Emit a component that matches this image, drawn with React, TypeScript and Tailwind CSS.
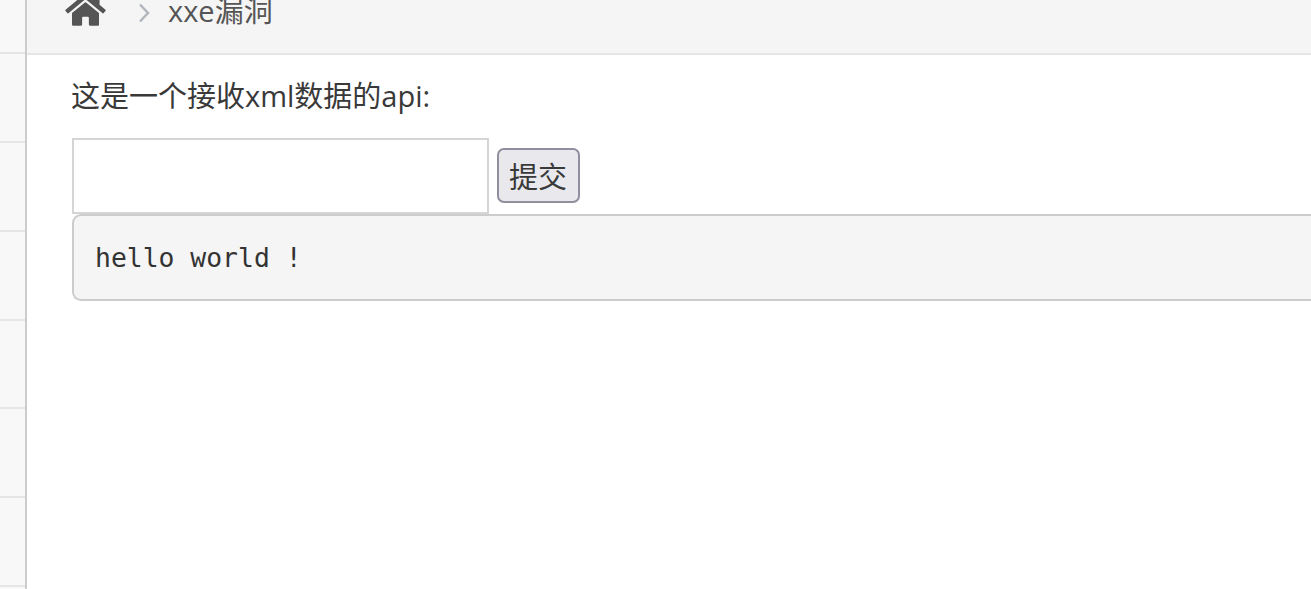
import React from "react";
import { FaHome } from "react-icons/fa";

const rows = [0, 1, 2, 3, 4, 5];

export default function App() {
  return (
    <div className="flex h-[589px] w-[1311px] overflow-hidden bg-white font-['Open_Sans','Noto_Sans_CJK_SC',sans-serif] text-[29px] text-[#393939]">
      {/* sidebar strip */}
      <div className="h-full w-[27px] shrink-0 border-r-2 border-[#cccccc] bg-[#f8f8f8]">
        <div className="h-[54.2px] border-b-2 border-[#e5e5e5]" />
        {rows.map((r) => (
          <div key={r} className="h-[88.8px] border-b-2 border-[#e5e5e5]" />
        ))}
      </div>

      <div className="min-w-0 flex-1">
        {/* breadcrumb */}
        <div className="flex h-[55px] items-start border-b-2 border-[#e5e5e5] bg-[#f5f5f5] text-[#555555]">
          <div className="-mt-[9px] flex h-[40px] items-center pl-[38px]">
            <FaHome className="-mt-[2px] h-[36px] w-[41px] text-[#555555]" />
            <svg className="ml-[32px] mt-[3px] h-[20px] w-[12px] text-[#b2b6bf]" viewBox="0 0 12 20" fill="none" stroke="currentColor" strokeWidth="2.5">
              <path d="M2 1.5l8 8.5-8 8.5" />
            </svg>
            <span className="-mt-[1px] ml-[18px] leading-[40px]">xxe漏洞</span>
          </div>
        </div>

        <div className="pl-[45px]">
          <p className="-ml-[1px] mt-[19px] h-[44px] leading-[44px]">这是一个接收xml数据的api:</p>
          <form className="mt-[20px] flex h-[76px] items-end">
            <input type="text" className="h-[76px] w-[417px] border-2 border-[#d5d5d5] bg-white outline-none" />
            <button type="button" className="mb-[11px] ml-[8px] h-[55px] w-[83px] rounded-[7px] border-2 border-[#8f8f9d] bg-[#e9e9ed] pr-[1px] pt-[2px] text-center leading-none text-[#393939]">
              提交
            </button>
          </form>
          <pre className="h-[87px] rounded-l-[9px] border-2 border-r-0 border-[#cccccc] bg-[#f5f5f5] pl-[21px] pt-[22px] font-['DejaVu_Sans_Mono',monospace] text-[26.4px] leading-[40px] text-[#333333]">
            hello world !
          </pre>
        </div>
      </div>
    </div>
  );
}
